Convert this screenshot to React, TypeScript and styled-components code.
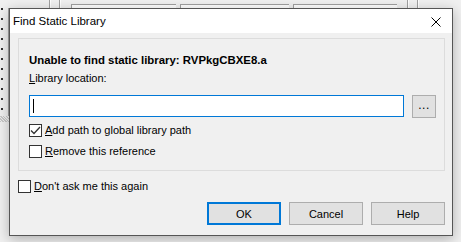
import styled, { createGlobalStyle } from "styled-components"

const FONT = `"Liberation Sans", Arial, sans-serif`

const GlobalStyle = createGlobalStyle`
  html, body {
    margin: 0;
    padding: 0;
    background: #f0f0f0;
  }
  * {
    box-sizing: border-box;
  }
`

const STATUS_PANELS = [
  { label: "Hints", width: 105 },
  { label: "Warnings", width: 109 },
  { label: "Errors", width: 104 },
]

function CheckMark() {
  return (
    <svg width='11' height='11' viewBox='0 0 11 11'>
      <path d='M1 5.5 L4 8.5 L10 2' fill='none' stroke='#333' strokeWidth='1.3' />
    </svg>
  )
}

function CheckBox({ checked, children }: { checked?: boolean; children: React.ReactNode }) {
  return (
    <CheckRow>
      <Box>{checked && <CheckMark />}</Box>
      <span>{children}</span>
    </CheckRow>
  )
}

export default function App() {
  return (
    <>
      <GlobalStyle />
      <Screen>
        <Backdrop>
          <StatusStrip>
            <Rule />
            <Rule />
            <PanelRow>
              {STATUS_PANELS.map((p) => (
                <StatusPanel key={p.label} style={{ width: p.width }}>
                  <span>{p.label}</span>
                  <span>0</span>
                </StatusPanel>
              ))}
            </PanelRow>
            <Rule />
            <Rule />
          </StatusStrip>
          <Gutter>
            <Dots />
            <Hatch />
          </Gutter>
        </Backdrop>

        <Dialog>
          <TitleBar>
            <Title>Find Static Library</Title>
            <CloseIcon width='10' height='10' viewBox='0 0 10 10'>
              <path d='M0.5 0.5 L9.5 9.5 M9.5 0.5 L0.5 9.5' stroke='#000' strokeWidth='1' />
            </CloseIcon>
          </TitleBar>
          <DialogBody>
            <Group>
              <Heading>Unable to find static library: RVPkgCBXE8.a</Heading>
              <Label>
                <u>L</u>ibrary location:
              </Label>
              <InputRow>
                <PathInput>
                  <Caret />
                </PathInput>
                <BrowseButton>...</BrowseButton>
              </InputRow>
              <Checks>
                <CheckBox checked>
                  <u>A</u>dd path to global library path
                </CheckBox>
                <CheckBox>
                  <u>R</u>emove this reference
                </CheckBox>
              </Checks>
            </Group>
            <DontAsk>
              <CheckBox>
                <u>D</u>on't ask me this again
              </CheckBox>
            </DontAsk>
            <Buttons>
              <Button $default>OK</Button>
              <Button>Cancel</Button>
              <Button>Help</Button>
            </Buttons>
          </DialogBody>
        </Dialog>
      </Screen>
    </>
  )
}

const Screen = styled.div`
  position: relative;
  width: 461px;
  height: 242px;
  overflow: hidden;
  background: #f0f0f0;
  font-family: ${FONT};
  font-size: 11px;
  color: #000;
`

const Backdrop = styled.div`
  display: flex;
  flex-direction: column;
  height: 100%;
`

const StatusStrip = styled.div`
  display: flex;
  align-items: stretch;
  height: 8px;
  padding-left: 49px;
  gap: 8px;
`

const Rule = styled.div`
  width: 2px;
  border-left: 1px solid #a0a0a0;
  border-right: 1px solid #ffffff;

  &:nth-child(4) {
    margin-left: 1px;
  }
`

const PanelRow = styled.div`
  display: flex;
  gap: 4px;
  margin-left: 2px;
  margin-right: 1px;
`

const StatusPanel = styled.div`
  display: flex;
  justify-content: space-between;
  height: 4px;
  margin-top: 4px;
  padding: 2px 6px 0 6px;
  border-top: 1px solid #a0a0a0;
  border-left: 1px solid #a0a0a0;
  background: #fff;
  color: #000080;
  font-size: 9px;
  line-height: 10px;
  overflow: hidden;
`

const Gutter = styled.div`
  display: flex;
  flex-direction: column;
  width: 9px;
  flex: 1;
`

const Dots = styled.div`
  height: 108px;
  border-right: 1px solid #a0a0a0;
  background-image: radial-gradient(circle, #303030 1px, transparent 1.2px);
  background-size: 6px 10px;
  background-position: -1px 56px;
  background-repeat: repeat-y;
`

const Hatch = styled.div`
  height: 6px;
  background: repeating-linear-gradient(45deg, #c8c8c8 0 1px, #f0f0f0 1px 2px);
`

const Dialog = styled.div`
  position: absolute;
  left: 9px;
  top: 8px;
  width: 444px;
  height: 228px;
  display: flex;
  flex-direction: column;
  border: 1px solid #555;
  background: #f0f0f0;
  box-shadow: 0 3px 12px rgba(0, 0, 0, 0.28);
`

const TitleBar = styled.div`
  display: flex;
  align-items: center;
  justify-content: space-between;
  height: 24px;
  padding: 0 11px 0 3px;
  background: #fff;
`

const Title = styled.span`
  font-size: 11.5px;
`

const CloseIcon = styled.svg`
  display: block;
  margin-top: 1px;
`

const DialogBody = styled.div`
  display: flex;
  flex-direction: column;
  padding: 5px 7px 0 8px;
`

const Group = styled.div`
  display: flex;
  flex-direction: column;
  padding: 14px 8px 10px 10px;
  border: 1px solid #dcdcdc;
`

const Heading = styled.div`
  font-weight: bold;
  font-size: 11.4px;
  line-height: 15px;
`

const Label = styled.div`
  margin-top: 3px;
  line-height: 15px;
`

const InputRow = styled.div`
  display: flex;
  align-items: center;
  gap: 8px;
  margin-top: 9px;
  height: 22px;
`

const PathInput = styled.div`
  flex: 1;
  height: 22px;
  display: flex;
  align-items: center;
  padding-left: 3px;
  border: 1px solid #0078d7;
  background: #fff;
`

const Caret = styled.span`
  width: 1px;
  height: 14px;
  background: #000;
`

const BrowseButton = styled.div`
  width: 24px;
  height: 23px;
  display: flex;
  align-items: center;
  justify-content: center;
  padding-bottom: 2px;
  border: 1px solid #adadad;
  background: #e1e1e1;
  font-size: 12px;
  letter-spacing: 0.5px;
`

const Checks = styled.div`
  display: flex;
  flex-direction: column;
  gap: 4px;
  margin-top: 5px;
`

const CheckRow = styled.div`
  display: flex;
  align-items: center;
  gap: 3px;
  height: 17px;
  line-height: 15px;
`

const Box = styled.span`
  width: 13px;
  height: 13px;
  display: flex;
  align-items: center;
  justify-content: center;
  border: 1px solid #333;
  background: #fff;
`

const DontAsk = styled.div`
  margin-top: 7px;
`

const Buttons = styled.div`
  display: flex;
  justify-content: flex-end;
  gap: 8px;
  margin-top: 7px;
`

const Button = styled.div<{ $default?: boolean }>`
  width: 74px;
  height: 23px;
  display: flex;
  align-items: center;
  justify-content: center;
  background: #e1e1e1;
  border: ${(p) => (p.$default ? "2px solid #0078d7" : "1px solid #adadad")};
`
